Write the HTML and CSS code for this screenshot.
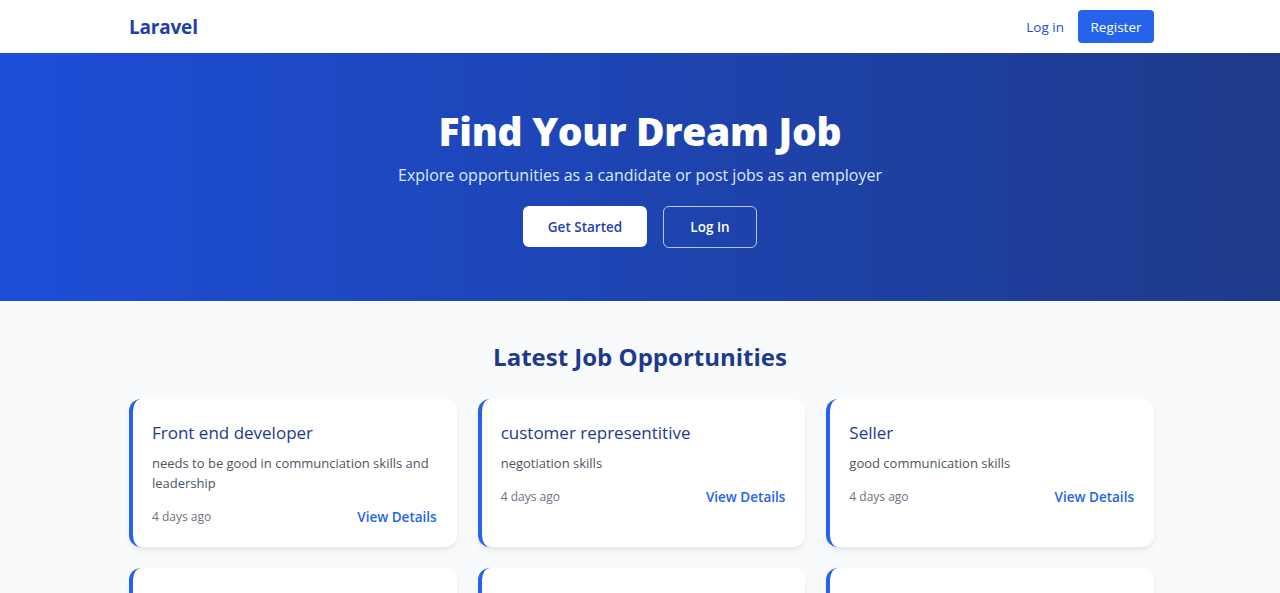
FILE: index.html
```html
<!DOCTYPE html>
<html lang="en">
<head>
<meta charset="utf-8">
<title>Laravel</title>
<link rel="stylesheet" href="styles.css">
</head>
<body>
<header class="nav">
  <div class="container nav-inner">
    <a class="brand" href="#">Laravel</a>
    <div class="nav-links">
      <a class="nav-login" href="#">Log in</a>
      <a class="nav-register" href="#">Register</a>
    </div>
  </div>
</header>
<section class="hero">
  <h1 class="hero-title">Find Your Dream Job</h1>
  <p class="hero-sub">Explore opportunities as a candidate or post jobs as an employer</p>
  <div class="hero-actions">
    <a class="btn btn-white" href="#">Get Started</a>
    <a class="btn btn-outline" href="#">Log In</a>
  </div>
</section>
<section class="jobs">
  <h2 class="jobs-title">Latest Job Opportunities</h2>
  <div class="container grid">
    <div class="card">
      <h3 class="card-title">Front end developer</h3>
      <p class="card-desc">needs to be good in communciation skills and leadership</p>
      <div class="card-foot"><span class="card-date">4 days ago</span><a class="card-link" href="#">View Details</a></div>
    </div>
    <div class="card">
      <h3 class="card-title">customer representitive</h3>
      <p class="card-desc">negotiation skills</p>
      <div class="card-foot"><span class="card-date">4 days ago</span><a class="card-link" href="#">View Details</a></div>
    </div>
    <div class="card">
      <h3 class="card-title">Seller</h3>
      <p class="card-desc">good communication skills</p>
      <div class="card-foot"><span class="card-date">4 days ago</span><a class="card-link" href="#">View Details</a></div>
    </div>
    <div class="card card-empty"></div>
    <div class="card card-empty"></div>
    <div class="card card-empty"></div>
  </div>
</section>
</body>
</html>
```
FILE: styles.css
```css
* { box-sizing: border-box; }
html, body { margin: 0; padding: 0; }
body {
  font-family: "Open Sans", "Noto Sans", sans-serif;
  background: #f8fafc;
  color: #1f2937;
}
a { text-decoration: none; }
.container {
  width: 1025px;
  margin-left: calc(50% - 511px);
}
.nav { background: #fff; height: 53px; }
.nav-inner {
  height: 53px;
  display: flex;
  align-items: center;
  justify-content: space-between;
}
.brand {
  font-size: 19px;
  font-weight: 700;
  color: #1e40af;
  letter-spacing: -0.2px;
}
.nav-links { display: flex; align-items: center; gap: 14px; }
.nav-login { font-size: 13.5px; color: #1d4ed8; }
.nav-register {
  font-size: 13.5px;
  color: #fff;
  background: #2563eb;
  border-radius: 4px;
  height: 33px;
  width: 76px;
  display: flex;
  align-items: center;
  justify-content: center;
}
.hero {
  height: 248px;
  background: linear-gradient(90deg, #1d4ed8 0%, #1e3a8a 100%);
  display: flex;
  flex-direction: column;
  align-items: center;
  padding-top: 56px;
}
.hero-title {
  margin: 0;
  font-size: 39px;
  line-height: 44px;
  font-weight: 800;
  color: #fff;
  letter-spacing: -0.3px;
}
.hero-sub {
  margin: 10px 0 0;
  font-size: 16px;
  line-height: 24px;
  color: #dbeafe;
}
.hero-actions { display: flex; gap: 16px; margin-top: 19px; }
.btn {
  height: 41px;
  border-radius: 6px;
  font-size: 13.5px;
  font-weight: 600;
  display: flex;
  align-items: center;
  justify-content: center;
}
.btn-white { background: #fff; color: #1e40af; width: 124px; }
.btn-outline {
  width: 94px;
  height: 42px;
  border: 1px solid rgba(255,255,255,0.7);
  color: #fff;
}
.jobs { padding-top: 40px; }
.jobs-title {
  margin: 0 0 26px;
  text-align: center;
  font-size: 24px;
  line-height: 32px;
  font-weight: 700;
  color: #1e3a8a;
}
.grid {
  display: grid;
  grid-template-columns: repeat(3, 1fr);
  gap: 21px;
}
.card {
  background: #fff;
  border-left: 4px solid #2563eb;
  border-radius: 12px;
  box-shadow: 0 4px 6px -1px rgba(0,0,0,0.08), 0 2px 4px -2px rgba(0,0,0,0.06);
  padding: 20px 20px 20px 19px;
  display: flex;
  flex-direction: column;
}
.card-empty { min-height: 148px; }
.card-title {
  margin: 0;
  font-size: 17px;
  line-height: 28px;
  font-weight: 500;
  color: #1e3a8a;
}
.card-desc {
  margin: 6px 0 0;
  font-size: 13px;
  line-height: 20px;
  color: #4b5563;
}
.card-foot {
  margin-top: 14px;
  display: flex;
  justify-content: space-between;
  align-items: center;
  line-height: 20px;
}
.card-date { font-size: 12px; color: #6b7280; }
.card-link { font-size: 13.5px; font-weight: 600; color: #2563eb; }
```
